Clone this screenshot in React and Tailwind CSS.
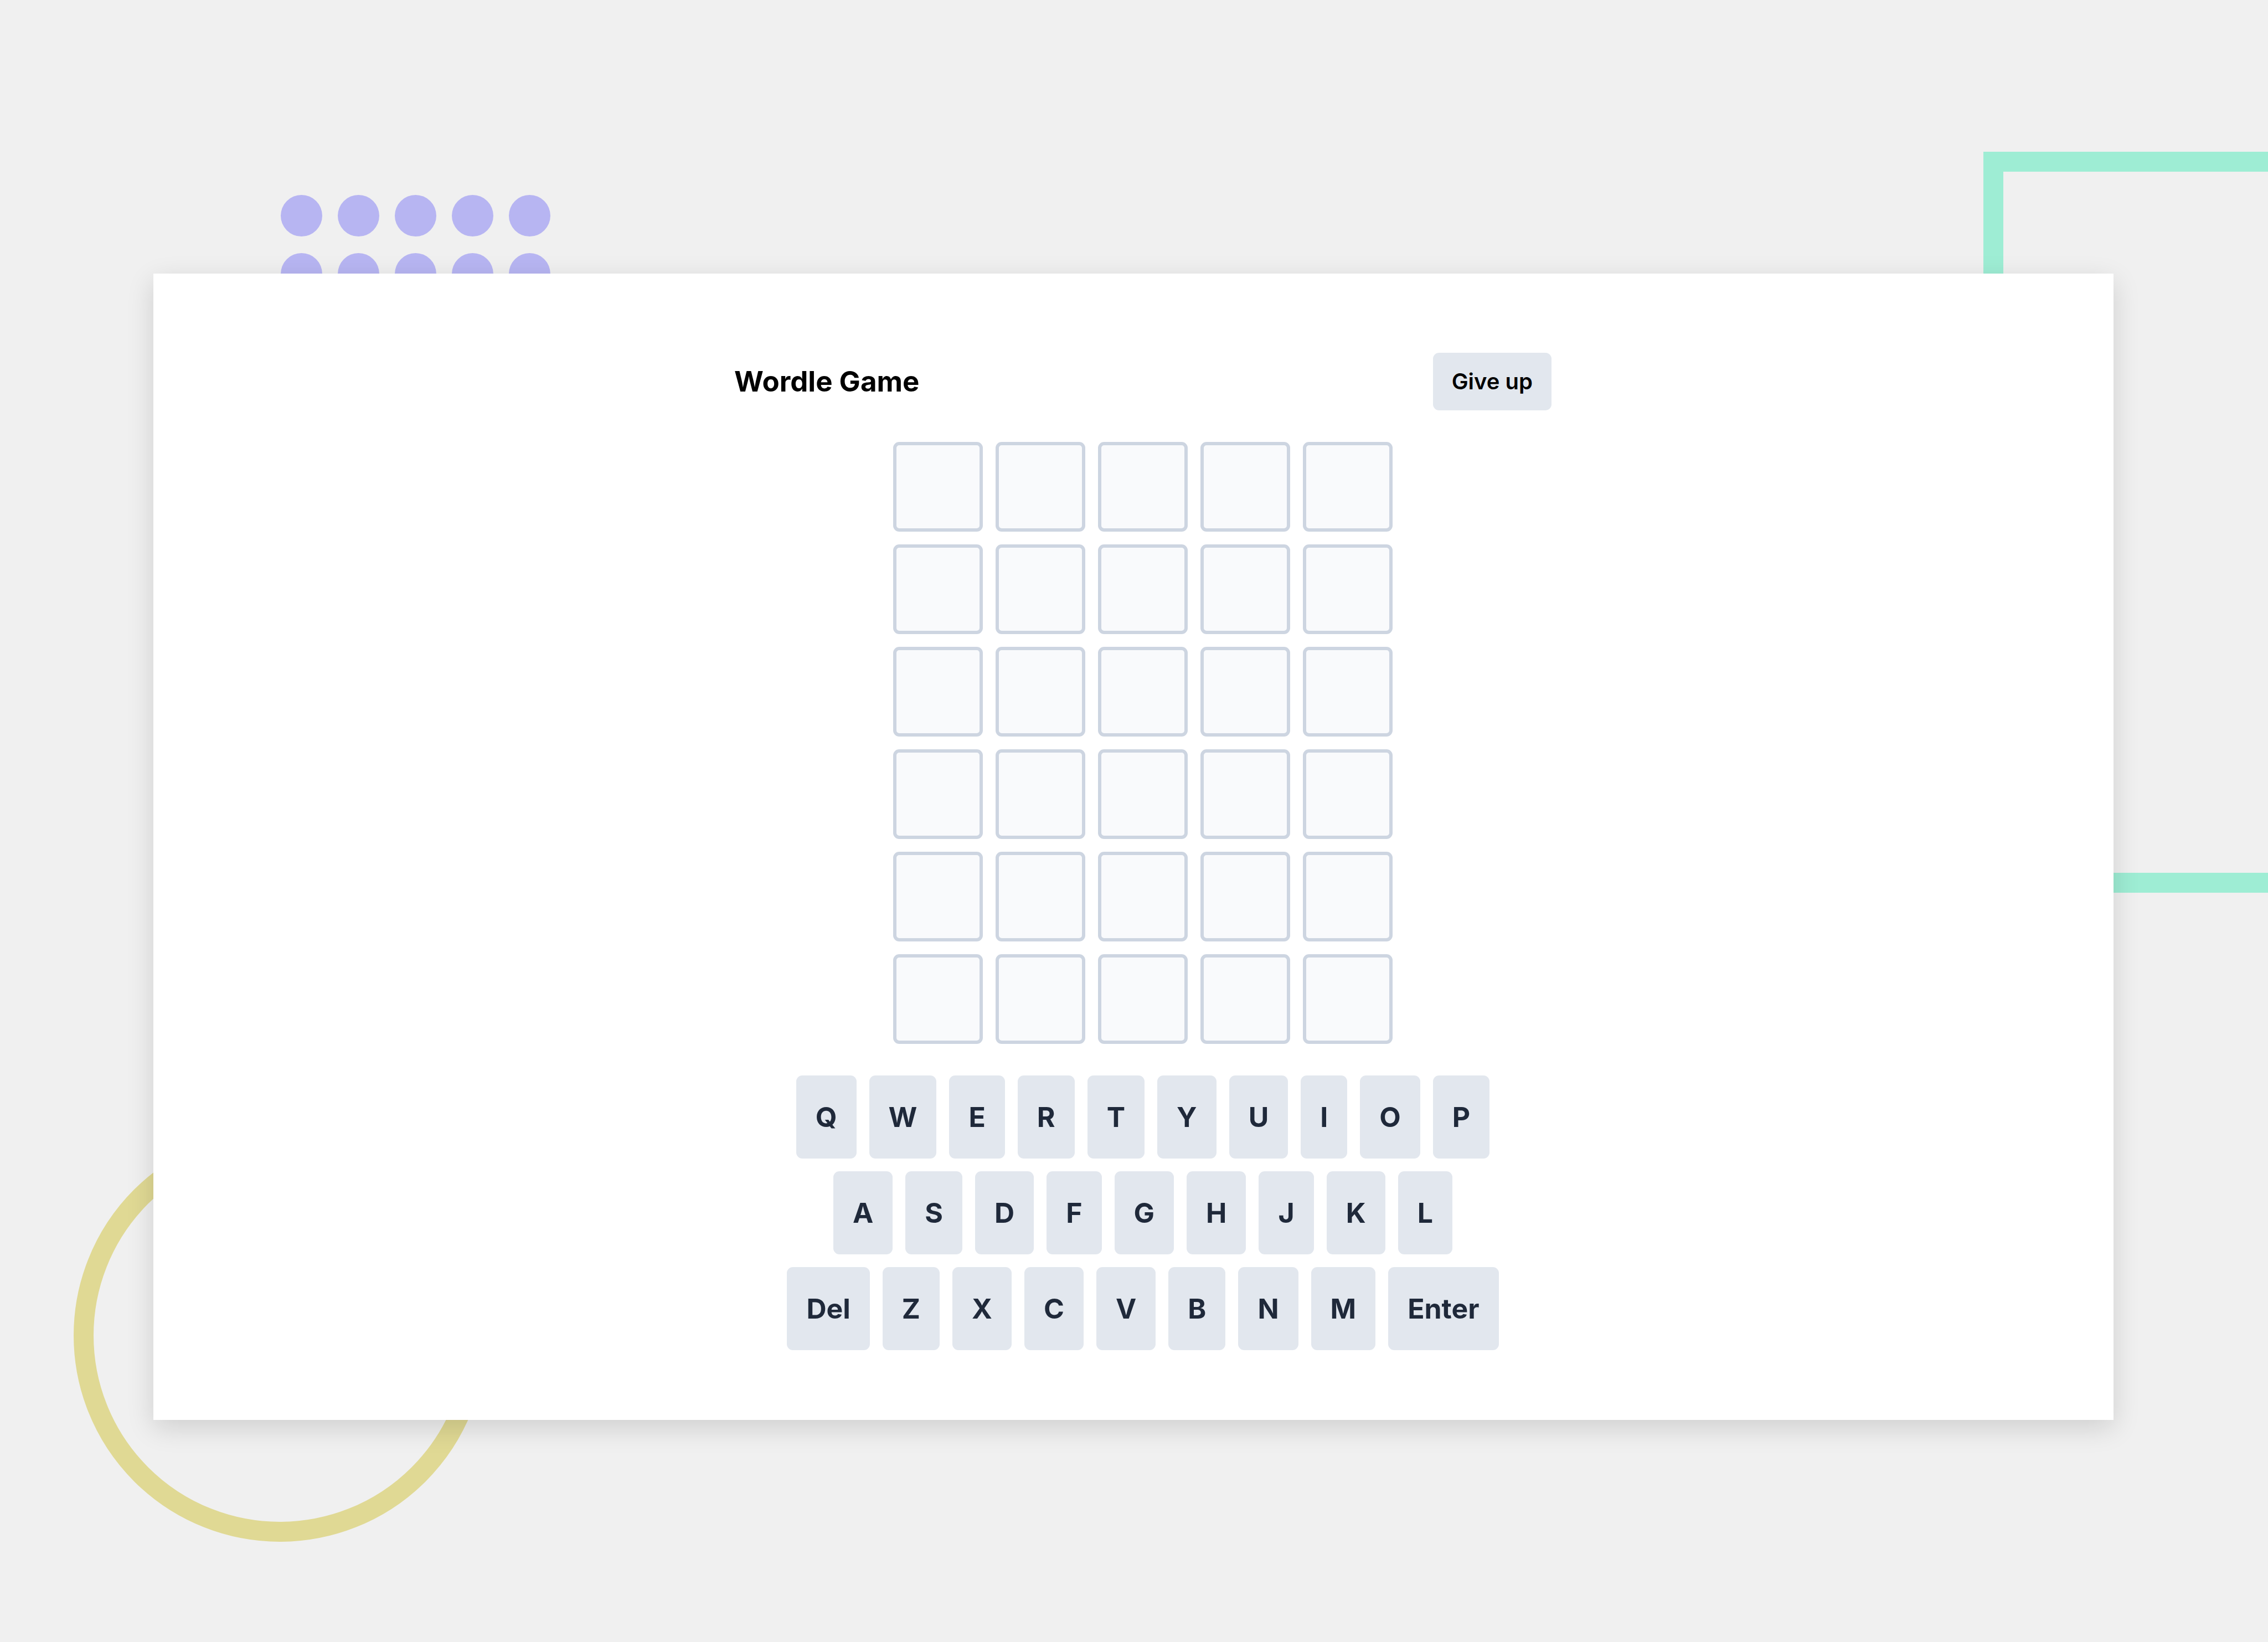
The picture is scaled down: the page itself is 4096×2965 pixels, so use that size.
const ROWS = [
  ["Q", "W", "E", "R", "T", "Y", "U", "I", "O", "P"],
  ["A", "S", "D", "F", "G", "H", "J", "K", "L"],
  ["Del", "Z", "X", "C", "V", "B", "N", "M", "Enter"],
];

const GUESSES = 6;
const LETTERS = 5;

function Backdrop() {
  return (
    <div aria-hidden="true" className="absolute inset-0 overflow-hidden">
      <div className="absolute left-[507px] top-[352px] grid grid-cols-[repeat(5,75px)] gap-x-[28px] gap-y-[30px]">
        {Array.from({ length: 15 }, (_, i) => (
          <span key={i} className="size-[75px] rounded-full bg-[#b7b5f2]" />
        ))}
      </div>
      <div className="absolute -right-[400px] top-[274px] h-[1338px] w-[914px] border-[36px] border-[#9eedd4]" />
      <div className="absolute left-[133px] top-[2039px] size-[745px] rounded-full border-[36px] border-[#e0d994]" />
    </div>
  );
}

function Board() {
  return (
    <div className="grid grid-cols-[repeat(5,162px)] gap-[23px]">
      {Array.from({ length: GUESSES * LETTERS }, (_, i) => (
        <div
          key={i}
          className="h-[162px] rounded-[11px] border-[6px] border-[#cdd5e1] bg-[#f9fafc]"
        />
      ))}
    </div>
  );
}

function Keyboard() {
  return (
    <div className="flex flex-col items-center gap-[23px]">
      {ROWS.map((row) => (
        <div key={row[0]} className="flex gap-[23px]">
          {row.map((label) => (
            <button
              key={label}
              type="button"
              className="h-[150px] rounded-[11px] bg-[#e2e7ee] px-[35px] text-[50px] font-bold leading-[80px] text-[#1f293a]"
            >
              {label}
            </button>
          ))}
        </div>
      ))}
    </div>
  );
}

export default function App() {
  return (
    <div className="relative min-h-screen bg-[#f0f0f0] pb-[401px] pl-[277px] pr-[279px] pt-[494px] font-['Inter',sans-serif]">
      <Backdrop />
      <main className="relative bg-white pb-[126px] pl-[34px] pt-[143px] shadow-[0_14px_46px_rgba(0,0,0,0.14)]">
        <div className="mx-auto flex max-w-[1476px] flex-col items-center gap-[57px]">
          <header className="flex w-full items-center justify-between">
            <h1 className="text-[51px] font-bold leading-[80px] text-black">Wordle Game</h1>
            <button
              type="button"
              className="h-[104px] rounded-[11px] bg-[#e2e7ee] px-[34px] text-[40px] font-semibold leading-[58px] text-black"
            >
              Give up
            </button>
          </header>
          <Board />
          <Keyboard />
        </div>
      </main>
    </div>
  );
}
